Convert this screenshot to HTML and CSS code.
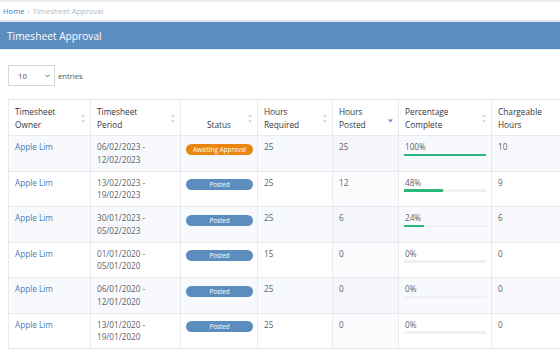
FILE: index.html
```html
<!DOCTYPE html>
<html lang="en">
<head>
<meta charset="utf-8">
<title>Timesheet Approval</title>
<link rel="stylesheet" href="styles.css">
</head>
<body>
<div class="topstrip"></div>
<nav class="crumbs"><a href="#">Home</a><span class="sep">›</span><span>Timesheet Approval</span></nav>
<header class="titlebar"><h1>Timesheet Approval</h1></header>
<main class="content">
  <div class="length">
    <div class="select"><span>10</span><svg class="chev" width="5" height="4" viewBox="0 0 5 4"><path d="M0.5 0.8 L2.5 2.8 L4.5 0.8" fill="none" stroke="#555" stroke-width="0.9"/></svg></div>
    <span>entries</span>
  </div>
  <div class="table-wrap">
    <table>
      <colgroup>
        <col class="c1"><col class="c2"><col class="c3"><col class="c4"><col class="c5"><col class="c6"><col class="c7">
      </colgroup>
      <thead>
        <tr>
          <th>Timesheet<br>Owner<svg class="sort" width="4" height="9" viewBox="0 0 4 9"><path d="M2 0 L4 3 L0 3Z M2 9 L4 6 L0 6Z" fill="#d6dae0"/></svg></th>
          <th>Timesheet<br>Period<svg class="sort" width="4" height="9" viewBox="0 0 4 9"><path d="M2 0 L4 3 L0 3Z M2 9 L4 6 L0 6Z" fill="#d6dae0"/></svg></th>
          <th class="center">Status<svg class="sort" width="4" height="9" viewBox="0 0 4 9"><path d="M2 0 L4 3 L0 3Z M2 9 L4 6 L0 6Z" fill="#d6dae0"/></svg></th>
          <th>Hours<br>Required<svg class="sort" width="4" height="9" viewBox="0 0 4 9"><path d="M2 0 L4 3 L0 3Z M2 9 L4 6 L0 6Z" fill="#d6dae0"/></svg></th>
          <th>Hours<br>Posted<svg class="sort desc" width="5" height="9" viewBox="0 0 5 9"><path d="M0 5.5 L5 5.5 L2.5 8.5Z" fill="#7b80c8"/></svg></th>
          <th>Percentage<br>Complete<svg class="sort" width="4" height="9" viewBox="0 0 4 9"><path d="M2 0 L4 3 L0 3Z M2 9 L4 6 L0 6Z" fill="#d6dae0"/></svg></th>
          <th>Chargeable<br>Hours</th>
        </tr>
      </thead>
      <tbody>
        <tr>
          <td><a class="owner" href="#">Apple Lim</a></td>
          <td>06/02/2023 -<br>12/02/2023</td>
          <td class="status"><span class="badge awaiting">Awaiting Approval</span></td>
          <td>25</td>
          <td class="sorted">25</td>
          <td class="pct"><div>100%</div><div class="bar"><div class="fill" style="width:100%"></div></div></td>
          <td>10</td>
        </tr>
        <tr>
          <td><a class="owner" href="#">Apple Lim</a></td>
          <td>13/02/2023 -<br>19/02/2023</td>
          <td class="status"><span class="badge posted">Posted</span></td>
          <td>25</td>
          <td class="sorted">12</td>
          <td class="pct"><div>48%</div><div class="bar"><div class="fill" style="width:48%"></div></div></td>
          <td>9</td>
        </tr>
        <tr>
          <td><a class="owner" href="#">Apple Lim</a></td>
          <td>30/01/2023 -<br>05/02/2023</td>
          <td class="status"><span class="badge posted">Posted</span></td>
          <td>25</td>
          <td class="sorted">6</td>
          <td class="pct"><div>24%</div><div class="bar"><div class="fill" style="width:24%"></div></div></td>
          <td>6</td>
        </tr>
        <tr>
          <td><a class="owner" href="#">Apple Lim</a></td>
          <td>01/01/2020 -<br>05/01/2020</td>
          <td class="status"><span class="badge posted">Posted</span></td>
          <td>15</td>
          <td class="sorted">0</td>
          <td class="pct"><div>0%</div><div class="bar"><div class="fill" style="width:0%"></div></div></td>
          <td>0</td>
        </tr>
        <tr>
          <td><a class="owner" href="#">Apple Lim</a></td>
          <td>06/01/2020 -<br>12/01/2020</td>
          <td class="status"><span class="badge posted">Posted</span></td>
          <td>25</td>
          <td class="sorted">0</td>
          <td class="pct"><div>0%</div><div class="bar"><div class="fill" style="width:0%"></div></div></td>
          <td>0</td>
        </tr>
        <tr>
          <td><a class="owner" href="#">Apple Lim</a></td>
          <td>13/01/2020 -<br>19/01/2020</td>
          <td class="status"><span class="badge posted">Posted</span></td>
          <td>25</td>
          <td class="sorted">0</td>
          <td class="pct"><div>0%</div><div class="bar"><div class="fill" style="width:0%"></div></div></td>
          <td>0</td>
        </tr>
      </tbody>
    </table>
  </div>
</main>
</body>
</html>
```
FILE: styles.css
```css
* { box-sizing: border-box; }
html, body { margin: 0; padding: 0; overflow: hidden; }
body {
  font-family: "Open Sans", "Noto Sans", sans-serif;
  background: #fff;
  color: #5a5f66;
}
.topstrip { height: 2px; background: #e8ecf1; }
.crumbs {
  height: 18px;
  display: flex;
  align-items: center;
  gap: 3px;
  padding-left: 3px;
  font-size: 7.6px;
  color: #b3b9c2;
}
.crumbs a { color: #3f78b6; text-decoration: none; }
.titlebar {
  height: 30px;
  border-top: 2px solid #dde3eb;
  border-bottom: 1px solid #e8edf3;
  background: #5b8dbf;
  display: flex;
  align-items: center;
  padding-left: 7px;
}
.titlebar h1 {
  margin: 0;
  font-size: 10.2px;
  font-weight: 400;
  color: #fff;
}
.content { padding: 15px 0 0 8px; }
.length {
  display: flex;
  align-items: center;
  gap: 3px;
  font-size: 7.6px;
  color: #555;
}
.select {
  width: 47px;
  height: 21px;
  border: 1px solid #d3d8df;
  display: flex;
  align-items: center;
  justify-content: space-between;
  padding: 0 4px 0 9px;
  font-size: 7.8px;
  color: #555;
}
.table-wrap { margin-top: 13px; overflow: hidden; }
table {
  border-collapse: collapse;
  table-layout: fixed;
  width: 640px;
}
.c1 { width: 82px; }
.c2 { width: 90px; }
.c3 { width: 77px; }
.c4 { width: 75px; }
.c5 { width: 66px; }
.c6 { width: 93px; }
.c7 { width: 157px; }
th, td {
  border: 1px solid #e7ebf0;
  text-align: left;
  font-size: 8.2px;
}
th {
  position: relative;
  vertical-align: bottom;
  font-weight: 500;
  font-size: 8.3px;
  color: #33363b;
  line-height: 13px;
  padding: 5px 14px 4px 6px;
}
th.center { text-align: center; padding-left: 14px; }
.sort { position: absolute; right: 5px; top: 14px; }
td {
  vertical-align: top;
  line-height: 12.5px;
  padding: 5px 6px 4.5px 6px;
  color: #5c6168;
}
tbody tr:nth-child(odd) td { background: #f7f9fc; }
tbody tr:nth-child(even) td.sorted { background: #fafbfd; }
tbody tr:nth-child(odd) td.sorted { background: #f4f6fa; }
.owner { color: #4a7bb5; text-decoration: none; }
td.status { padding: 7.5px 4px 0 5px; }
.badge {
  display: block;
  width: 100%;
  height: 11px;
  line-height: 11px;
  border-radius: 6px;
  text-align: center;
  color: #fff;
  font-size: 6.3px;
}
.awaiting { background: #ea8511; }
.posted { background: #5b8dbf; }
td.pct { padding-right: 5px; padding-left: 6px; }
.bar {
  height: 2.5px;
  margin-left: -1px;
  background: #eef0f3;
}
.fill { height: 100%; background: #2bb67c; }
```
